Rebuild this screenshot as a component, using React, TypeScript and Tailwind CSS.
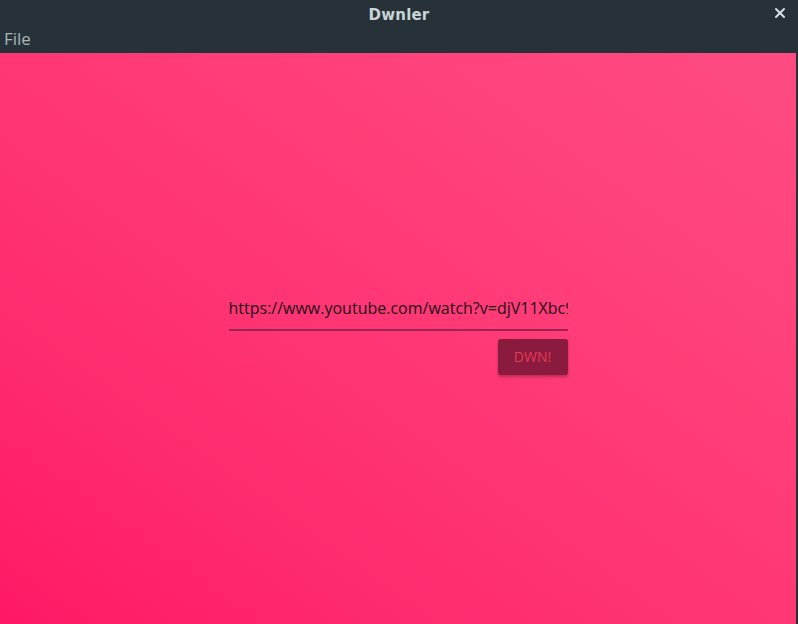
import { X } from 'lucide-react';

export default function App() {
    return (
        <div className="w-[798px] h-[624px] flex flex-col bg-[#263238] overflow-hidden" style={{ fontFamily: '"Open Sans", "DejaVu Sans", sans-serif' }}>
            {/* Title bar */}
            <div className="h-[30px] flex items-center justify-center relative shrink-0">
                <span className="text-[15px] font-bold text-[#c8d3da] tracking-[0.2px]" style={{ fontFamily: '"DejaVu Sans", sans-serif' }}>
                    Dwnler
                </span>
                <X className="absolute right-[10px] top-[5px] w-[16px] h-[16px] text-[#d5dde2]" strokeWidth={3} />
            </div>

            {/* Menu bar */}
            <div className="h-[23px] flex items-start px-[4px] shrink-0">
                <span className="text-[17px] leading-[18px] text-[#a9b5bb]">File</span>
            </div>

            {/* Content */}
            <main className="flex-1 flex items-center justify-center bg-gradient-to-tr from-[#ff1766] to-[#ff4b82] border-r-2 border-[#263238]">
                <div className="w-[339px] flex flex-col items-end mt-[-7px]">
                    <input
                        readOnly
                        value="https://www.youtube.com/watch?v=djV11Xbc914"
                        className="w-full bg-transparent outline-none text-[16px] text-[#1e1018] pb-[9px] pl-[-1px] border-b-2 border-[#9c2452]"
                    />
                    <button className="mt-[8px] w-[70px] h-[36px] rounded-[3px] bg-[#8a1a3e] text-[#e63a52] text-[14px] shadow-[0_2px_3px_rgba(0,0,0,0.25)]">
                        DWN!
                    </button>
                </div>
            </main>
        </div>
    );
}
